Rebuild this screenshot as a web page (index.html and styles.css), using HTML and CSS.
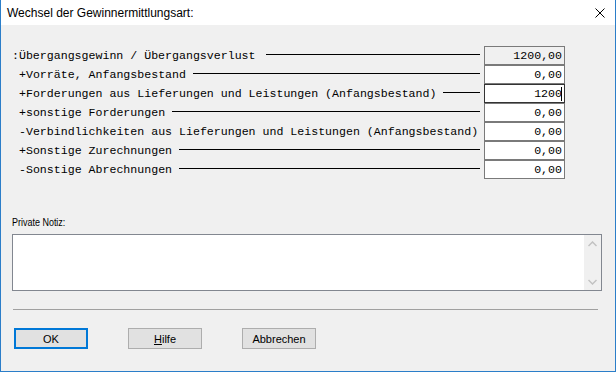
FILE: index.html
```html
<!DOCTYPE html>
<html lang="de">
<head>
    <meta charset="UTF-8">
    <title>Wechsel der Gewinnermittlungsart</title>
    <link rel="stylesheet" href="styles.css">
</head>
<body>
    <div class="window">
        <!-- Title bar -->
        <div class="titlebar">
            <span class="title">Wechsel der Gewinnermittlungsart:</span>
            <svg class="close" width="10" height="10" viewBox="0 0 10 10">
                <path d="M0.5 0.5 L9.5 9.5 M9.5 0.5 L0.5 9.5" stroke="#000" stroke-width="1" fill="none"/>
            </svg>
        </div>

        <div class="content">
            <!-- Amount rows -->
            <div class="rows">
                <div class="row first">
                    <span class="caption">:Übergangsgewinn / Übergangsverlust</span>
                    <span class="rule wide"></span>
                    <div class="amount readonly">1200,00</div>
                </div>
                <div class="row">
                    <span class="caption">+Vorräte, Anfangsbestand</span>
                    <span class="rule"></span>
                    <div class="amount">0,00</div>
                </div>
                <div class="row">
                    <span class="caption">+Forderungen aus Lieferungen und Leistungen (Anfangsbestand)</span>
                    <span class="rule"></span>
                    <div class="amount focused">1200<span class="caret"></span></div>
                </div>
                <div class="row">
                    <span class="caption">+sonstige Forderungen</span>
                    <span class="rule"></span>
                    <div class="amount">0,00</div>
                </div>
                <div class="row">
                    <span class="caption">-Verbindlichkeiten aus Lieferungen und Leistungen (Anfangsbestand)</span>
                    <span class="spacer"></span>
                    <div class="amount">0,00</div>
                </div>
                <div class="row">
                    <span class="caption">+Sonstige Zurechnungen</span>
                    <span class="rule"></span>
                    <div class="amount">0,00</div>
                </div>
                <div class="row">
                    <span class="caption">-Sonstige Abrechnungen</span>
                    <span class="rule"></span>
                    <div class="amount">0,00</div>
                </div>
            </div>

            <!-- Note -->
            <div class="note-label"><span>Private Notiz:</span></div>
            <div class="note">
                <div class="note-text"></div>
                <div class="scrollbar">
                    <div class="arrow">
                        <svg width="9" height="6" viewBox="0 0 9 6"><path d="M0.5 5 L4.5 1 L8.5 5" stroke="#c2c2c2" stroke-width="1.5" fill="none"/></svg>
                    </div>
                    <div class="arrow">
                        <svg width="9" height="6" viewBox="0 0 9 6"><path d="M0.5 1 L4.5 5 L8.5 1" stroke="#c2c2c2" stroke-width="1.5" fill="none"/></svg>
                    </div>
                </div>
            </div>

            <div class="separator"></div>

            <!-- Buttons -->
            <div class="buttons">
                <div class="button default">OK</div>
                <div class="button"><u>H</u>ilfe</div>
                <div class="button">Abbrechen</div>
            </div>
        </div>
    </div>
</body>
</html>
```

FILE: styles.css
```css
body {
    margin: 0;
    padding: 0;
    background: #f0f0f0;
    font-family: 'Liberation Sans', Arial, sans-serif;
}
.window {
    width: 616px;
    height: 372px;
    box-sizing: border-box;
    border: 1px solid #2b7ec9;
    border-top: none;
    background-color: #f0f0f0;
    overflow: hidden;
}
.titlebar {
    height: 25px;
    background-color: #ffffff;
    display: flex;
    align-items: center;
    justify-content: space-between;
    padding: 0 10px 0 6px;
}
.title {
    font-size: 12px;
    color: #000;
}
.close {
    display: block;
}
.content {
    padding-top: 21px;
}
.row {
    display: flex;
    align-items: center;
    height: 19px;
    padding: 0 50px 0 18px;
}
.row.first {
    padding-left: 11px;
}
.caption {
    font-family: 'Liberation Mono', 'Courier New', monospace;
    font-size: 11.6px;
    white-space: pre;
    color: #000;
}
.rule {
    flex: 1;
    height: 1px;
    background-color: #000;
    margin: 0 4px 0 7px;
    position: relative;
    top: -1px;
}
.rule.wide {
    margin-left: 10px;
}
.spacer {
    flex: 1;
}
.amount {
    width: 81px;
    height: 19px;
    box-sizing: border-box;
    border: 1px solid #7a7a7a;
    background-color: #ffffff;
    font-family: 'Liberation Mono', 'Courier New', monospace;
    font-size: 11.6px;
    line-height: 17px;
    text-align: right;
    padding-right: 2px;
    display: flex;
    justify-content: flex-end;
    align-items: center;
}
.amount.readonly {
    background-color: #f0f0f0;
}
.amount.focused {
    border-color: #333;
}
.caret {
    display: inline-block;
    width: 1px;
    height: 14px;
    background-color: #000;
    margin-left: -1px;
}
.note-label {
    margin-top: 37px;
    padding-left: 11px;
    font-size: 11.5px;
    line-height: 13px;
    color: #000;
}
.note-label span {
    display: inline-block;
    transform: scaleX(0.78);
    transform-origin: left center;
}
.note {
    display: flex;
    height: 57px;
    box-sizing: border-box;
    margin: 5px 13px 0 11px;
    border: 1px solid #828790;
    background-color: #ffffff;
}
.note-text {
    flex: 1;
}
.scrollbar {
    width: 17px;
    background-color: #f0f0f0;
    display: flex;
    flex-direction: column;
    justify-content: space-between;
}
.arrow {
    height: 17px;
    display: flex;
    align-items: center;
    justify-content: center;
}
.arrow svg {
    display: block;
}
.separator {
    margin: 18px 17px 0 12px;
    border-top: 1px solid #a0a0a0;
}
.buttons {
    display: flex;
    gap: 40px;
    margin-top: 18px;
    padding-left: 13px;
}
.button {
    width: 74px;
    height: 21px;
    box-sizing: border-box;
    border: 1px solid #adadad;
    background-color: #e1e1e1;
    font-size: 11px;
    color: #000;
    display: flex;
    align-items: center;
    justify-content: center;
}
.button.default {
    border: 2px solid #0078d7;
}
```
